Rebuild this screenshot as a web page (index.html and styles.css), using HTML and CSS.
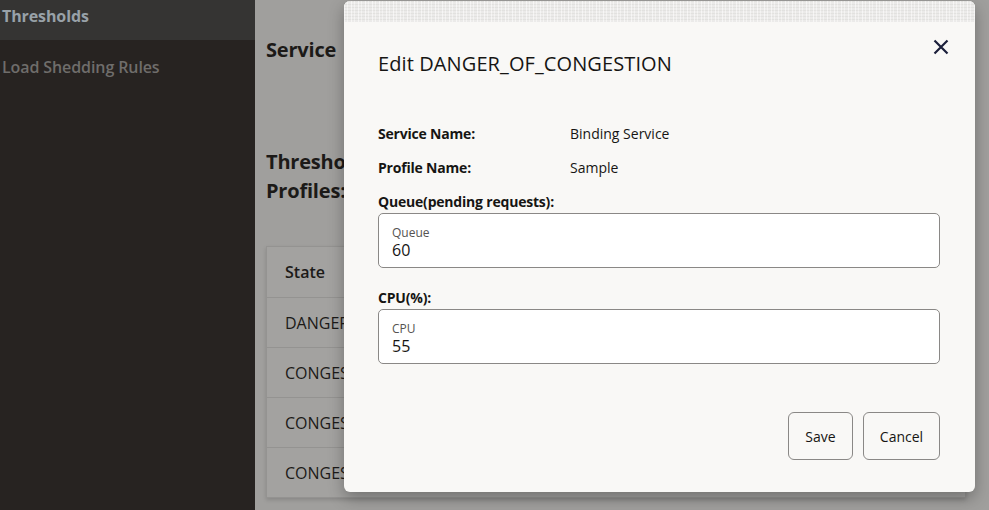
FILE: index.html
```html
<!DOCTYPE html>
<html>
<head>
<meta charset="utf-8">
<link rel="stylesheet" href="styles.css">
</head>
<body>
<div class="app">
  <nav class="sidebar">
    <div class="nav-item active">Thresholds</div>
    <div class="nav-item">Load Shedding Rules</div>
  </nav>
  <main class="main">
    <h2 class="h-service">Service</h2>
    <h2 class="h-profiles">Thresholds<br>Profiles:</h2>
    <div class="table">
      <div class="row head">State</div>
      <div class="row">DANGER_OF_CONGESTION</div>
      <div class="row">CONGESTED</div>
      <div class="row">CONGESTED</div>
      <div class="row">CONGESTED</div>
    </div>
  </main>
</div>

<div class="dialog">
  <div class="grip"></div>
  <div class="dlg-body">
    <div class="dlg-head">
      <h1 class="dlg-title">Edit DANGER_OF_CONGESTION</h1>
      <button class="close" aria-label="Close">
        <svg width="16" height="16" viewBox="0 0 16 16"><path d="M1.5 1.5 L14.5 14.5 M14.5 1.5 L1.5 14.5" stroke="#1b1f3b" stroke-width="2.2" fill="none"/></svg>
      </button>
    </div>
    <div class="info">
      <div class="info-row"><span class="lbl">Service Name:</span><span class="val">Binding Service</span></div>
      <div class="info-row"><span class="lbl">Profile Name:</span><span class="val">Sample</span></div>
    </div>
    <div class="field">
      <div class="lbl">Queue(pending requests):</div>
      <div class="input"><span class="in-lbl">Queue</span><span class="in-val">60</span></div>
    </div>
    <div class="field cpu">
      <div class="lbl">CPU(%):</div>
      <div class="input"><span class="in-lbl">CPU</span><span class="in-val">55</span></div>
    </div>
    <div class="actions">
      <button class="btn save">Save</button>
      <button class="btn cancel">Cancel</button>
    </div>
  </div>
</div>
</body>
</html>
```
FILE: styles.css
```css
* { box-sizing: border-box; }
html, body { margin: 0; padding: 0; }
body {
  width: 989px;
  height: 510px;
  overflow: hidden;
  font-family: "Open Sans", "Noto Sans", sans-serif;
  background: #a09f9d;
  position: relative;
}
.app { display: flex; height: 510px; }
.sidebar {
  width: 255px;
  flex: none;
  background: #272321;
}
.nav-item {
  height: 50px;
  padding: 4px 2px 0;
  display: flex;
  align-items: center;
  font-size: 16px;
  font-weight: 600;
  color: #6f6d6b;
  letter-spacing: -0.1px;
}
.nav-item.active {
  height: 40px;
  background: #353433;
  color: #98a1a8;
  align-items: flex-start;
  padding-top: 5px;
  font-weight: 700;
}
.main {
  flex: 1;
  padding-left: 11px;
  background: #a09f9d;
}
.main h2 {
  margin: 0;
  font-size: 20px;
  font-weight: 700;
  color: #1c1a18;
  letter-spacing: -0.2px;
}
.h-service { padding-top: 35px; line-height: 30px; }
.h-profiles { margin-top: 82px !important; line-height: 29px; }
.table {
  margin-top: 41px;
  width: 700px;
  border: 1px solid #949391;
  background: #a3a2a0;
  box-shadow: 0 2px 4px rgba(0,0,0,0.15);
}
.row {
  height: 50px;
  padding-left: 18px;
  display: flex;
  align-items: center;
  font-size: 16px;
  color: #1c1a18;
  border-top: 1px solid #949391;
}
.row.head { border-top: none; font-weight: 600; height: 50px; }

.dialog {
  position: absolute;
  left: 344px;
  top: 1px;
  width: 631px;
  height: 491px;
  background: #f9f8f6;
  border-radius: 6px;
  box-shadow: 0 6px 16px rgba(0,0,0,0.3);
  overflow: hidden;
}
.grip {
  height: 21px;
  background:
    repeating-linear-gradient(90deg, rgba(255,255,255,0.45) 0 1px, rgba(0,0,0,0.015) 1px 3px, rgba(255,255,255,0.3) 3px 4px, rgba(0,0,0,0.02) 4px 7px),
    repeating-linear-gradient(0deg, rgba(255,255,255,0.25) 0 2px, rgba(0,0,0,0.02) 2px 3px),
    #ebeae8;
}
.dlg-body { padding: 0 35px 0 34px; }
.dlg-head {
  display: flex;
  justify-content: space-between;
  align-items: flex-start;
  height: 96px;
}
.dlg-title {
  margin: 0;
  padding-top: 28px;
  font-size: 20px;
  font-weight: 400;
  color: #161513;
  letter-spacing: 0.1px;
}
.close {
  border: none;
  background: none;
  padding: 0;
  margin: 17px -9px 0 0;
  width: 16px;
  height: 16px;
  display: flex;
}
.info { display: flex; flex-direction: column; gap: 14px; margin-top: 6px; }
.info-row { display: flex; font-size: 14px; line-height: 20px; color: #161513; }
.info-row .lbl { width: 192px; }
.lbl { font-weight: 700; font-size: 14px; color: #161513; letter-spacing: -0.2px; }
.val { font-weight: 400; }
.field { margin-top: 14px; }
.field .lbl { line-height: 20px; }
.field.cpu { margin-top: 20px; }
.input {
  margin-top: 1px;
  height: 55px;
  background: #fff;
  border: 1px solid #8a8886;
  border-radius: 5px;
  padding: 11px 13px 0;
  display: flex;
  flex-direction: column;
}
.in-lbl { font-size: 12px; color: #555351; line-height: 15px; }
.in-val { font-size: 16px; color: #161513; line-height: 20px; margin-top: 0; }
.actions {
  display: flex;
  justify-content: flex-end;
  gap: 10px;
  margin-top: 48px;
}
.btn {
  height: 48px;
  border: 1px solid #8a8886;
  border-radius: 6px;
  background: #f9f8f6;
  font-family: inherit;
  font-size: 14px;
  color: #161513;
}
.save { width: 65px; }
.cancel { width: 77px; }
```
